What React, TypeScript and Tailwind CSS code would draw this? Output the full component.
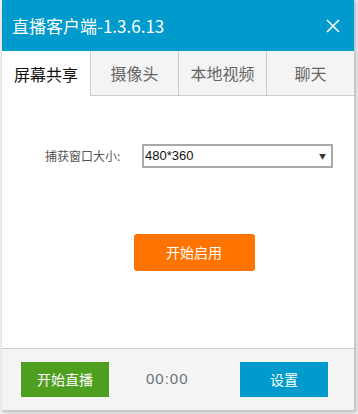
import { useState } from "react";

const tabs = ["屏幕共享", "摄像头", "本地视频", "聊天"];

const TitleBar = () => {
    return (
        <div className="flex h-[51px] items-center justify-between bg-[#009acd] pl-[10px] pr-[14px] text-white">
            <span className="text-[17px]">直播客户端-1.3.6.13</span>
            <svg width="14" height="14" viewBox="0 0 14 14" stroke="white" strokeWidth="1.6">
                <path d="M1 1L13 13M13 1L1 13" />
            </svg>
        </div>
    );
};

const TabBar = ({ active, onChange }: { active: number; onChange: (i: number) => void }) => {
    return (
        <div className="flex h-[45px]">
            {tabs.map((t, i) => (
                <button
                    key={t}
                    onClick={() => onChange(i)}
                    className={`flex w-[88px] items-center justify-center text-[16px] ${
                        i === active
                            ? "bg-white text-[#111]"
                            : "border-b border-l border-[#cccccc] bg-[#f4f4f4] text-[#666]"
                    }`}
                >
                    {t}
                </button>
            ))}
        </div>
    );
};

const App = () => {
    const [active, setActive] = useState(0);

    return (
        <div
            className="h-[414px] w-[358px] bg-[#f0f0f0]"
            style={{ fontFamily: '"Noto Sans CJK SC", "Liberation Sans", sans-serif' }}
        >
            <div className="ml-[2px] flex h-[411px] w-[353px] flex-col border-r border-b border-[#c8c8c8] bg-white shadow-[1px_1px_3px_rgba(0,0,0,0.25)]">
                <TitleBar />
                <TabBar active={active} onChange={setActive} />

                {/* content */}
                <div className="flex flex-1 flex-col">
                    <div className="mt-[48px] flex items-center">
                        <span className="ml-[43px] w-[97px] text-[12px] text-[#555]">捕获窗口大小:</span>
                        <div className="flex h-[24px] w-[191px] items-center justify-between border-2 border-[#a9a9a9] px-[1px]">
                            <span className="text-[13px] text-[#111]" style={{ fontFamily: '"Liberation Sans", sans-serif' }}>
                                480*360
                            </span>
                            <span className="mr-[4px] text-[7px] text-[#333]">▼</span>
                        </div>
                    </div>

                    <div className="mt-[66px] flex justify-center">
                        <button className="ml-[32px] h-[37px] w-[121px] rounded-[3px] bg-[#ff7300] text-[14px] text-white">
                            开始启用
                        </button>
                    </div>
                </div>

                {/* footer */}
                <div className="flex h-[62px] items-center border-t border-[#cccccc] bg-[#f4f4f4] px-[19px]">
                    <button className="h-[35px] w-[88px] bg-[#4e9e1f] text-[14px] text-white">开始直播</button>
                    <span
                        className="ml-[37px] text-[15px] tracking-[1px] text-[#6b7280]"
                        style={{ fontFamily: '"Liberation Sans", sans-serif' }}
                    >
                        00:00
                    </span>
                    <div className="flex-1" />
                    <button className="mr-[7px] h-[35px] w-[88px] bg-[#009acd] text-[14px] text-white">设置</button>
                </div>
            </div>
        </div>
    );
};

export default App;
